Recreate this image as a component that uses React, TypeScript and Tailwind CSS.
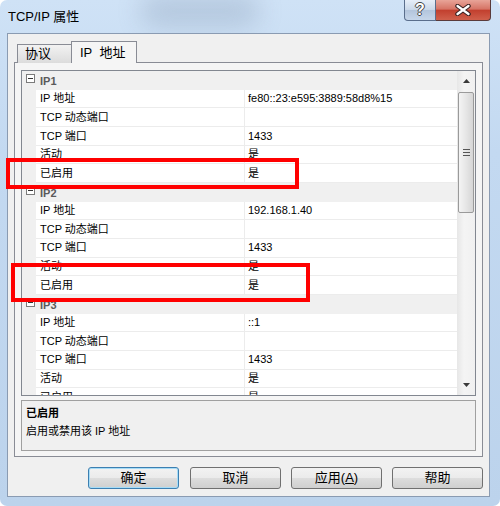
import { Fragment } from "react";

const SECTIONS = [
  {
    name: "IP1",
    rows: [
      ["IP 地址", "fe80::23:e595:3889:58d8%15"],
      ["TCP 动态端口", ""],
      ["TCP 端口", "1433"],
      ["活动", "是"],
      ["已启用", "是"],
    ],
  },
  {
    name: "IP2",
    rows: [
      ["IP 地址", "192.168.1.40"],
      ["TCP 动态端口", ""],
      ["TCP 端口", "1433"],
      ["活动", "是"],
      ["已启用", "是"],
    ],
  },
  {
    name: "IP3",
    rows: [
      ["IP 地址", "::1"],
      ["TCP 动态端口", ""],
      ["TCP 端口", "1433"],
      ["活动", "是"],
      ["已启用", "是"],
    ],
  },
];

const BUTTON =
  "flex h-[22px] w-[91px] items-center justify-center rounded-[3px] border text-[13px] text-black bg-[linear-gradient(180deg,#f2f2f2_0%,#ebebeb_48%,#dddddd_52%,#cfcfcf_100%)]";

const CategoryRow = ({ name }: { name: string }) => (
  <div className="flex h-[18.67px] shrink-0 items-center bg-[#f0f0f0]">
    <div className="flex w-[14px] justify-center">
      <div className="relative -mt-[3px] ml-[3px] h-[9px] w-[9px] border border-[#7b7b7b] bg-white">
        <div className="absolute left-[1px] top-[3px] h-px w-[5px] bg-[#333]" />
      </div>
    </div>
    <span className="pl-[4px] pt-[2px] text-[11px] font-bold text-[#5a5a5a]">{name}</span>
  </div>
);

const DataRow = ({ label, value }: { label: string; value: string }) => (
  <div className="flex h-[18.67px] shrink-0">
    <div className="w-[14px] bg-[#f0f0f0]" />
    <div className="flex w-[209px] items-center border-b border-r border-[#ececec] bg-white pl-[4px] text-[11px] text-black">
      {label}
    </div>
    <div className="flex flex-1 items-center border-b border-[#ececec] bg-white pl-[3px] text-[11px] text-black">
      {value}
    </div>
  </div>
);

const Scrollbar = () => (
  <div className="flex w-[18px] flex-col bg-[linear-gradient(90deg,#e7e7e7,#f4f4f4_40%,#f0f0f0)]">
    <div className="flex h-[20px] items-center justify-center">
      <svg width="7" height="4" viewBox="0 0 7 4">
        <path d="M0 4 L3.5 0 L7 4 Z" fill="#3a3a3a" />
      </svg>
    </div>
    <div className="mx-[1px] mt-[1px] flex h-[121px] flex-col items-center justify-center gap-[2px] rounded-[2px] border border-[#9a9a9a] bg-[linear-gradient(90deg,#f4f4f4,#e6e6e6_50%,#d6d6d6)]">
      <div className="h-px w-[7px] bg-[#555]" />
      <div className="h-px w-[7px] bg-[#555]" />
      <div className="h-px w-[7px] bg-[#555]" />
    </div>
    <div className="flex-1" />
    <div className="flex h-[20px] items-center justify-center">
      <svg width="7" height="4" viewBox="0 0 7 4">
        <path d="M0 0 L3.5 4 L7 0 Z" fill="#3a3a3a" />
      </svg>
    </div>
  </div>
);

export default function App() {
  return (
    <div className="relative h-[506px] w-[500px] overflow-hidden rounded-[7px] bg-[linear-gradient(180deg,#cfe2f6_0%,#c3d9f1_30%,#bcd3ec_100%)] font-['Liberation_Sans','Noto_Sans_CJK_SC',sans-serif]">
      {/* blurred glass behind title */}
      <div className="absolute left-[140px] top-[-6px] h-[34px] w-[120px] rounded-full bg-[#7f93ad] opacity-30 blur-md" />

      <div className="relative flex h-full flex-col pb-[9px] pl-[7px] pr-[10px]">
        {/* title bar */}
        <div className="flex h-[33px] items-start">
          <span className="ml-[1px] mt-[7px] text-[13px] text-black">TCP/IP 属性</span>
          <div className="-mr-px ml-auto flex">
            <div className="flex h-[21px] w-[32px] items-center justify-center rounded-bl-[4px] border border-t-0 border-[#5a6e8c] bg-[linear-gradient(180deg,#e6eef8_0%,#c9d7e8_50%,#b3c5dc_52%,#c6d6ea_100%)]">
              <span className="text-[16px] font-bold leading-none text-white [text-shadow:-1px_0_#444,1px_0_#444,0_-1px_#444,0_1px_#444]">
                ?
              </span>
            </div>
            <div className="flex h-[21px] w-[55px] items-center justify-center rounded-br-[4px] border border-l-0 border-t-0 border-[#5a3b3b] bg-[linear-gradient(180deg,#e8a498_0%,#d67466_45%,#c2402f_52%,#d0604c_100%)]">
              <svg width="16" height="12" viewBox="0 0 16 12">
                <path d="M2.5 2 L13.5 10 M13.5 2 L2.5 10" stroke="#3b2323" strokeWidth="4.5" strokeLinecap="round" />
                <path d="M2.5 2 L13.5 10 M13.5 2 L2.5 10" stroke="#ffffff" strokeWidth="2.3" strokeLinecap="round" />
              </svg>
            </div>
          </div>
        </div>

        {/* client area */}
        <div className="flex flex-1 flex-col border border-[#8a9bb2] bg-[#f0f0f0]">
          {/* tabs */}
          <div className="relative z-10 -mb-px ml-[9px] mt-[7px] flex h-[22px] items-end">
            <div className="flex h-[19px] w-[55px] items-center border border-b-0 border-[#898c95] bg-[linear-gradient(180deg,#f2f2f2,#dcdcdc)] pl-[7px] text-[13px] text-black">
              协议
            </div>
            <div className="-ml-px flex h-[22px] w-[66px] items-center border border-b-0 border-[#898c95] bg-[#f5f5f5] pl-[8px] text-[13px] text-black">
              IP&nbsp;&nbsp;地址
            </div>
          </div>

          {/* tab panel */}
          <div className="mx-[6px] flex h-[395px] flex-col border border-[#898c95] bg-[#f5f5f5] px-[6px] pb-[5px] pt-[7px]">
            {/* property grid */}
            <div className="flex h-[326px] border border-[#828790] bg-white">
              <div className="flex flex-1 flex-col overflow-hidden">
                {SECTIONS.map((s) => (
                  <Fragment key={s.name}>
                    <CategoryRow name={s.name} />
                    {s.rows.map(([label, value], i) => (
                      <DataRow key={i} label={label} value={value} />
                    ))}
                  </Fragment>
                ))}
              </div>
              <Scrollbar />
            </div>

            {/* description */}
            <div className="mt-[4px] flex h-[52px] flex-col border border-[#a0a0a0] bg-[#f0f0f0] px-[4px] pt-[3px] text-[11px] text-black">
              <span className="font-bold leading-[18px]">已启用</span>
              <span className="leading-[18px]">启用或禁用该 IP 地址</span>
            </div>
          </div>

          {/* buttons */}
          <div className="mt-[10px] flex justify-end gap-[10px] pr-[6px]">
            <button className={`${BUTTON} mr-px border-[#3c7fb1] shadow-[inset_0_0_0_1px_#a6dcf7]`}>确定</button>
            <button className={`${BUTTON} border-[#707070]`}>取消</button>
            <button className={`${BUTTON} border-[#707070]`}>
              应用(<span className="underline">A</span>)
            </button>
            <button className={`${BUTTON} border-[#707070]`}>帮助</button>
          </div>
        </div>
      </div>

      {/* red annotation boxes */}
      <div className="absolute left-[6px] top-[158px] h-[31px] w-[293px] border-[4px] border-[#ff0000]" />
      <div className="absolute left-[11px] top-[263px] h-[39px] w-[299px] border-[4px] border-[#ff0000]" />
    </div>
  );
}
